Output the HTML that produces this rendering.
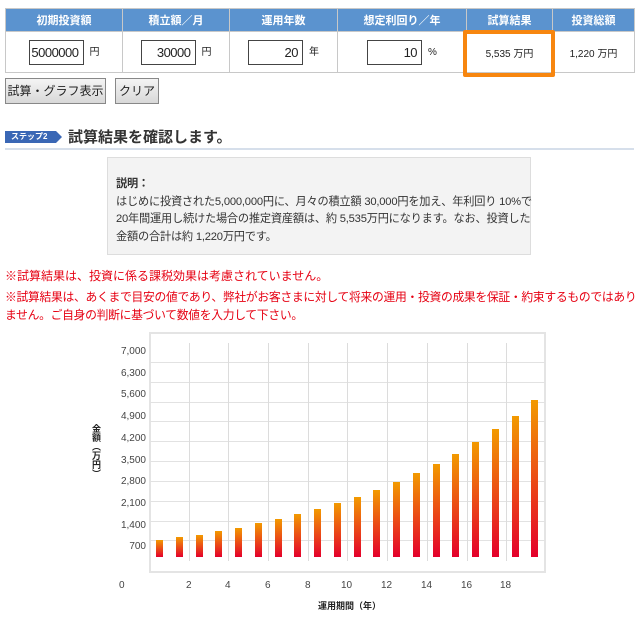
<!DOCTYPE html>
<html><head><meta charset="utf-8">
<style>
*{margin:0;padding:0;box-sizing:border-box}
body{width:640px;height:629px;background:#fff;font-family:"Liberation Sans","Noto Sans CJK JP",sans-serif;color:#222;position:relative;overflow:hidden}
.a{position:absolute}
table{position:absolute;left:5px;top:8px;width:629px;border-collapse:collapse;table-layout:fixed}
th{background:#5b93cf;color:#fff;font-size:11px;height:23px;border:1px solid #c8c8c8;font-weight:bold}
td{height:41px;border:1px solid #c8c8c8;font-size:10px;text-align:center;white-space:nowrap}
.in{display:inline-block;width:55px;height:25px;border:1px solid #444;font-size:13px;letter-spacing:-0.5px;text-align:right;padding-right:4px;line-height:23px;vertical-align:middle;margin-right:6px}
.btn{position:absolute;top:78px;height:26px;border:1px solid #888;background:linear-gradient(#f4f4f4,#d8d8d8);font-size:12px;line-height:24px;text-align:center}
.red{color:#e60012;font-size:12px;left:5px;white-space:nowrap}
.yl{right:494px;font-size:10px;color:#444;text-align:right}
.xl{font-size:10px;color:#444;top:580px}
</style></head><body>
<table>
<colgroup><col style="width:117px"><col style="width:107px"><col style="width:108px"><col style="width:129px"><col style="width:86px"><col style="width:82px"></colgroup>
<tr><th>初期投資額</th><th>積立額／月</th><th>運用年数</th><th>想定利回り／年</th><th>試算結果</th><th>投資総額</th></tr>
<tr><td><span class="in">5000000</span>円</td><td><span class="in">30000</span>円</td><td><span class="in">20</span>年</td><td><span class="in">10</span>%</td><td>5,535 万円</td><td>1,220 万円</td></tr>
</table>
<div class="a" style="left:463px;top:30px;width:92px;height:47px;border:4px solid #f7860f;border-radius:2px"></div>
<div class="btn" style="left:5px;width:101px">試算・グラフ表示</div>
<div class="btn" style="left:115px;width:44px">クリア</div>
<div class="a" style="left:5px;top:131px;width:51px;height:12px;background:#3a67b5;color:#fff;font-size:8px;font-weight:bold;line-height:12px;padding-left:6px">ステップ2</div>
<div class="a" style="left:56px;top:131px;width:0;height:0;border-top:6px solid transparent;border-bottom:6px solid transparent;border-left:6px solid #3a67b5"></div>
<div class="a" style="left:68px;top:126px;font-size:15px;font-weight:bold;color:#333">試算結果を確認します。</div>
<div class="a" style="left:5px;top:148px;width:629px;height:2px;background:#d6dfeb"></div>
<div class="a" style="left:107px;top:157px;width:424px;height:98px;background:#f3f3f3;border:1px solid #ddd;padding:18px 0 0 8px;font-size:11.2px;line-height:17.5px;color:#333;white-space:nowrap;letter-spacing:-0.2px"><b>説明：</b><br>はじめに投資された5,000,000円に、月々の積立額 30,000円を加え、年利回り 10%で<br>20年間運用し続けた場合の推定資産額は、約 5,535万円になります。なお、投資した<br>金額の合計は約 1,220万円です。</div>
<div class="a red" style="top:267px">※試算結果は、投資に係る課税効果は考慮されていません。</div>
<div class="a red" style="top:288px;line-height:18px;letter-spacing:-0.3px;font-size:11.8px">※試算結果は、あくまで目安の値であり、弊社がお客さまに対して将来の運用・投資の成果を保証・約束するものではあり<br>ません。ご自身の判断に基づいて数値を入力して下さい。</div>
<div class="a" style="left:149px;top:332px;width:397px;height:241px;border:2px solid #e4e4e4"></div>
<div id="ch"></div>
<div class="a" style="left:90px;top:424px;writing-mode:vertical-rl;font-size:9px;font-weight:bold">金額（万円）</div>
<div class="a" style="left:318px;top:599px;font-size:9px;font-weight:bold">運用期間（年）</div>
<script>
var c=document.getElementById('ch'),h='';
[362,382,402,421,441,461,481,501,521,540].forEach(function(y){h+='<div class="a" style="left:150px;top:'+y+'px;width:395px;height:1px;background:#e2e2e2"></div>'});
[189,228,268,308,347,387,427,467,506].forEach(function(x){h+='<div class="a" style="left:'+x+'px;top:343px;width:1px;height:218px;background:#dcdcdc"></div>'});
var t=[540,537,535,531,528,523,519,514,509,503,497,490,482,473,464,454,442,429,416,400];
t.forEach(function(y,i){var x=156+i*19.75;h+='<div class="a" style="left:'+x+'px;top:'+y+'px;width:7px;height:'+(557-y)+'px;background:linear-gradient(#f29a00,#e4002b)"></div>'});
var yl=['7,000','6,300','5,600','4,900','4,200','3,500','2,800','2,100','1,400','700'];
yl.forEach(function(s,i){h+='<div class="a yl" style="top:'+(346+i*21.7)+'px">'+s+'</div>'});
h+='<div class="a xl" style="left:119px">0</div>';
[2,4,6,8,10,12,14,16,18].forEach(function(n,i){var x=[189,228,268,308,347,387,427,467,506][i];h+='<div class="a xl" style="left:'+(x-(n>9?6:3))+'px">'+n+'</div>'});
c.innerHTML=h;
</script>
</body></html>
